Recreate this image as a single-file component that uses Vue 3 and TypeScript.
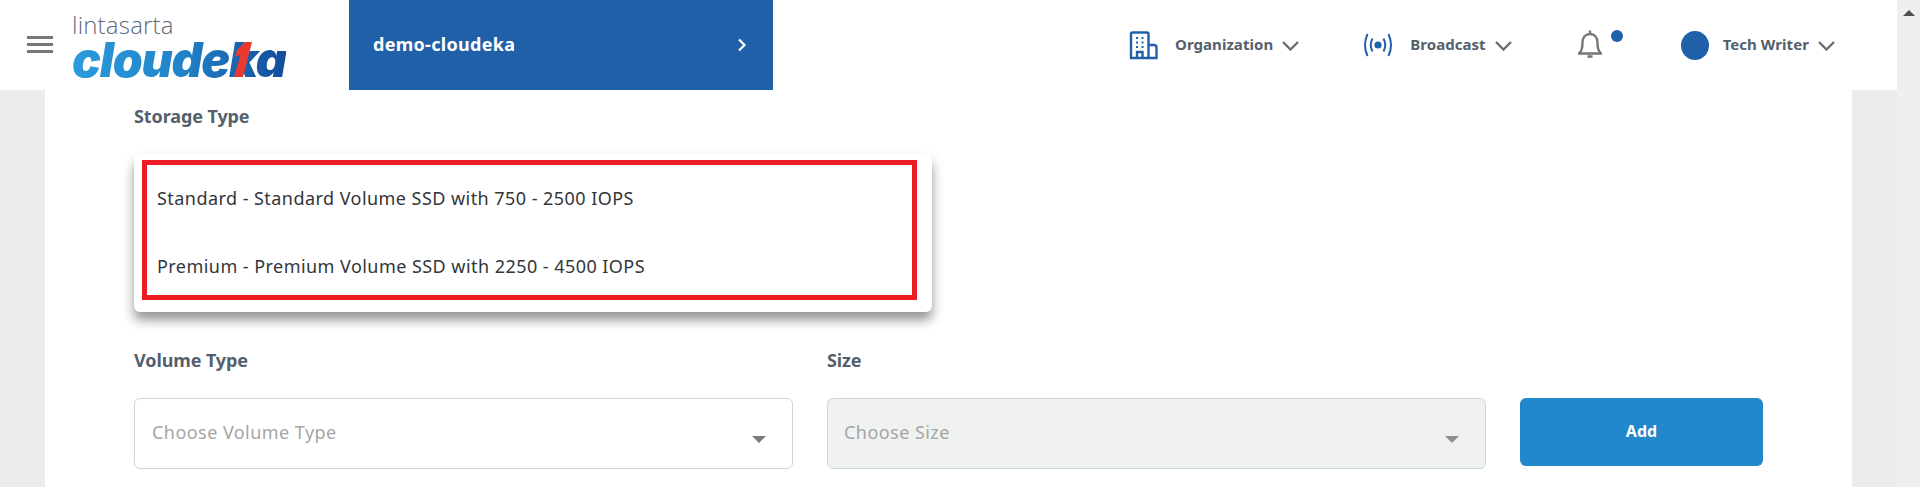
<template>
  <div class="page">
    <div class="main">
      <header class="topbar">
        <div class="burger">
          <span></span>
          <span></span>
          <span></span>
        </div>
        <div class="logo">
          <div class="logo-top">lintasarta</div>
          <div class="logo-name">cloudeka</div>
          <svg class="logo-one" width="20" height="37" viewBox="0 0 20 37">
            <path d="M1 36 L7.5 14 L2 16 L4 9 L12 1 L19 1 L10 36 Z" fill="#ea3a30" />
          </svg>
        </div>
        <div class="project">
          <span class="project-name">demo-cloudeka</span>
          <svg width="12" height="14" viewBox="0 0 12 14">
            <path d="M3 1.5 L8.5 7 L3 12.5" fill="none" stroke="#fff" stroke-width="2.2" />
          </svg>
        </div>
        <nav class="nav">
          <div class="nav-item org">
            <svg width="29" height="29" viewBox="0 0 29 29" fill="none" stroke="#2060a8" stroke-width="2.4">
              <path d="M2 27 V3 a1.5 1.5 0 0 1 1.5 -1.5 H18 a1.5 1.5 0 0 1 1.5 1.5 V27 Z" />
              <path d="M19.5 14 H25 a2.5 2.5 0 0 1 2.5 2.5 V27 H19.5" />
              <path d="M8 27 V21 H13.5 V27" />
              <path d="M7 7 H9 M12.5 7 H14.5 M7 11.5 H9 M12.5 11.5 H14.5 M7 16 H9 M12.5 16 H14.5" stroke-width="2.2" />
            </svg>
            <span class="nav-label">Organization</span>
            <svg class="chev" width="17" height="10" viewBox="0 0 17 10">
              <path d="M1 1 L8.5 8.5 L16 1" fill="none" stroke="#6b6f73" stroke-width="2.4" />
            </svg>
          </div>
          <div class="nav-item cast">
            <svg width="30" height="24" viewBox="0 0 30 24" fill="none" stroke="#2060a8" stroke-width="2">
              <circle cx="15" cy="12" r="3.6" fill="#2060a8" stroke="none" />
              <path d="M9.5 5.5 Q6 12 9.5 18.5 M20.5 5.5 Q24 12 20.5 18.5" />
              <path d="M4.5 1 Q-0.5 12 4.5 23 M25.5 1 Q30.5 12 25.5 23" />
            </svg>
            <span class="nav-label">Broadcast</span>
            <svg class="chev" width="17" height="10" viewBox="0 0 17 10">
              <path d="M1 1 L8.5 8.5 L16 1" fill="none" stroke="#6b6f73" stroke-width="2.4" />
            </svg>
          </div>
          <div class="bell">
            <svg width="24" height="29" viewBox="0 0 24 29" fill="none" stroke="#777" stroke-width="2.4">
              <path d="M1 23.5 H23 C20 21 19.5 18.5 19.5 13 C19.5 7 16.5 4 12 4 C7.5 4 4.5 7 4.5 13 C4.5 18.5 4 21 1 23.5 Z" />
              <path d="M12 0.5 V4" />
              <path d="M9.5 26.5 H14.5" stroke-width="2.6" />
            </svg>
            <i class="bell-dot"></i>
          </div>
          <div class="nav-item user">
            <i class="avatar"></i>
            <span class="nav-label">Tech Writer</span>
            <svg class="chev" width="17" height="10" viewBox="0 0 17 10">
              <path d="M1 1 L8.5 8.5 L16 1" fill="none" stroke="#6b6f73" stroke-width="2.4" />
            </svg>
          </div>
        </nav>
      </header>

      <section class="card">
        <label class="field-label">Storage Type</label>
        <div class="menu">
          <div v-for="opt in storageOptions" :key="opt" class="menu-row">{{ opt }}</div>
          <div class="highlight"></div>
        </div>
        <div class="form-row">
          <div class="field">
            <label class="field-label">Volume Type</label>
            <div class="select">
              <span>Choose Volume Type</span>
              <i class="arrow"></i>
            </div>
          </div>
          <div class="field">
            <label class="field-label">Size</label>
            <div class="select disabled">
              <span>Choose Size</span>
              <i class="arrow"></i>
            </div>
          </div>
          <button class="add-btn">Add</button>
        </div>
      </section>
    </div>
    <div class="scrollbar">
      <i class="scroll-up"></i>
    </div>
  </div>
</template>

<script setup lang="ts">
const storageOptions: string[] = [
  'Standard - Standard Volume SSD with 750 - 2500 IOPS',
  'Premium - Premium Volume SSD with 2250 - 4500 IOPS'
]
</script>

<style scoped>
.page {
  display: flex;
  height: 487px;
  overflow: hidden;
  background: #ececec;
  font-family: "Noto Sans", "Open Sans", sans-serif;
}

.main {
  flex: 1;
  min-width: 0;
}

.scrollbar {
  width: 23px;
  background: #efefef;
  position: relative;
}

.scroll-up {
  position: absolute;
  left: 6px;
  top: 10px;
  border-left: 6px solid transparent;
  border-right: 6px solid transparent;
  border-bottom: 6px solid #4f4f4f;
}

.topbar {
  height: 90px;
  background: #fff;
  display: flex;
  padding-left: 27px;
}

.burger {
  width: 26px;
  margin-top: 36px;
  display: flex;
  flex-direction: column;
  gap: 4px;
}

.burger span {
  height: 3px;
  background: #777;
}

.logo {
  width: 277px;
  margin-left: 19px;
  position: relative;
}

.logo-top {
  margin-top: 10px;
  font-family: "Open Sans", sans-serif;
  font-weight: 300;
  font-size: 24px;
  line-height: 30px;
  letter-spacing: 0.2px;
  color: #5c6b7b;
}

.logo-name {
  display: inline-block;
  margin-top: 1px;
  font-family: Inter, sans-serif;
  font-weight: 900;
  font-style: italic;
  font-size: 48px;
  line-height: 38px;
  letter-spacing: -1.2px;
  background: linear-gradient(90deg, #2a9bdc 0%, #2184c8 50%, #134c9c 100%);
  -webkit-background-clip: text;
  background-clip: text;
  color: transparent;
}

.logo-one {
  position: absolute;
  left: 161px;
  top: 41px;
}

.project {
  width: 424px;
  background: #2060a8;
  color: #fff;
  font-weight: 700;
  font-size: 18px;
  letter-spacing: 0.3px;
  padding: 0 25px 0 24px;
  box-sizing: border-box;
  display: flex;
  align-items: center;
  justify-content: space-between;
}

.project-name {
  margin-top: -2px;
}

.nav {
  display: flex;
  align-items: center;
  margin-left: 356px;
}

.nav-item {
  display: flex;
  align-items: center;
}

.nav-label {
  font-size: 15px;
  font-weight: 700;
  letter-spacing: 0.05px;
  color: #555f6d;
  margin-top: -2px;
}

.org svg:first-child {
  margin-right: 17px;
}

.cast svg:first-child {
  margin-right: 17px;
}

.chev {
  margin-left: 9px;
  margin-top: 2px;
}

.org {
  margin-right: 64px;
}

.cast {
  margin-right: 66px;
}

.bell {
  position: relative;
  height: 29px;
  margin-right: 79px;
  margin-top: -1px;
}

.bell-dot {
  position: absolute;
  left: 33px;
  top: 0;
  width: 12px;
  height: 12px;
  border-radius: 50%;
  background: #2060a8;
}

.avatar {
  width: 28px;
  height: 29px;
  border-radius: 50%;
  background: #2060a8;
  margin-right: 14px;
}

.card {
  margin: 0 45px;
  height: 397px;
  background: #fff;
  padding: 16px 0 0 89px;
  box-sizing: border-box;
}

.field-label {
  display: block;
  font-size: 18px;
  line-height: 20px;
  font-weight: 700;
  letter-spacing: -0.1px;
  color: #555f6d;
}

.menu {
  position: relative;
  width: 798px;
  margin-top: 28px;
  padding: 10px 0 12px 23px;
  box-sizing: border-box;
  background: #fff;
  border-radius: 6px;
  box-shadow: 0 8px 12px rgba(0, 0, 0, 0.42);
}

.menu-row {
  height: 68px;
  display: flex;
  align-items: center;
  font-size: 18px;
  letter-spacing: 0.45px;
  color: #33363a;
}

.highlight {
  position: absolute;
  left: 8px;
  top: 6px;
  width: 775px;
  height: 140px;
  border: 5px solid #ed1c24;
  box-sizing: border-box;
}

.form-row {
  display: flex;
  gap: 34px;
  margin-top: 38px;
}

.field {
  width: 659px;
}

.select {
  margin-top: 28px;
  height: 71px;
  box-sizing: border-box;
  border: 1px solid #c9d6e2;
  border-radius: 6px;
  background: #fff;
  padding: 0 26px 3px 17px;
  display: flex;
  align-items: center;
  justify-content: space-between;
  font-size: 18px;
  letter-spacing: 0.45px;
  color: #a5a5a5;
}

.select.disabled {
  background: #f0f2f2;
  padding-left: 16px;
}

.arrow {
  margin-top: 14px;
  border-left: 7px solid transparent;
  border-right: 7px solid transparent;
  border-top: 7px solid #7c7c7c;
}

.select.disabled .arrow {
  border-top-color: #909090;
}

.add-btn {
  width: 243px;
  height: 68px;
  margin-top: 48px;
  padding-bottom: 3px;
  border: none;
  border-radius: 6px;
  background: #2188cb;
  color: #fff;
  font-family: inherit;
  font-size: 16px;
  font-weight: 700;
}
</style>
